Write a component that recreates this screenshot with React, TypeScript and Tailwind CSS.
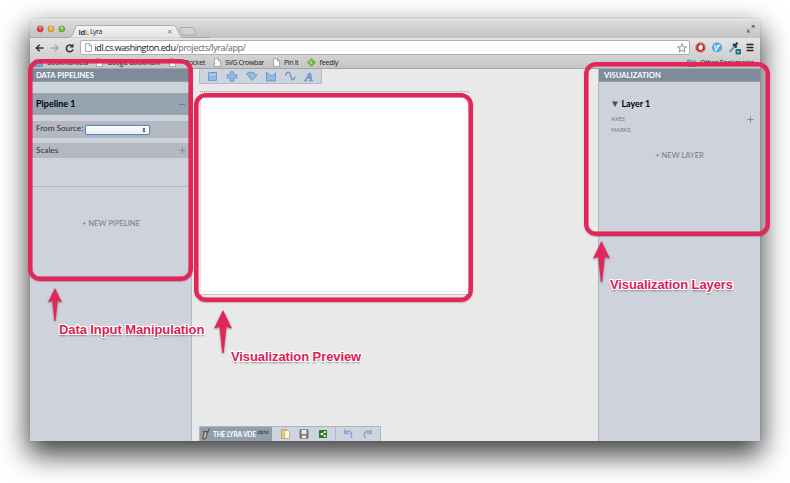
import React from 'react';

const lato = "font-['Lato','Liberation_Sans',sans-serif]";
const lucida = "font-['Open_Sans','DejaVu_Sans',sans-serif]";

function PageIcon() {
  return (
    <svg width="7" height="9" viewBox="0 0 7 9" className="shrink-0">
      <path d="M.5.5h3.7l2.3 2.3v5.7h-6zM4.2.5v2.3h2.3" fill="#fafafa" stroke="#999" strokeWidth=".8" />
    </svg>
  );
}

function FolderIcon() {
  return (
    <svg width="9" height="8" viewBox="0 0 9 8" className="shrink-0">
      <path d="M.5 1h3l.8 1h4.2v5.500h-8z" fill="#7ea6d0" stroke="#5682b4" strokeWidth=".8" />
      <path d="M1 3.200h7" stroke="#b9d3ec" strokeWidth=".7" />
    </svg>
  );
}

function TitleBar() {
  return (
    <div className="relative flex h-[19px] items-end rounded-t-[3px] border-t border-[#ececec] bg-gradient-to-b from-[#dddddd] to-[#c2c2c2]">
      <svg width="180" height="19" viewBox="0 0 180 19" className="absolute bottom-0 left-0">
        <defs>
          <linearGradient id="tab" x2="0" y2="1">
            <stop stopColor="#f3f3f3" />
            <stop offset="1" stopColor="#e5e5e5" />
          </linearGradient>
        </defs>
        <path d="M0 18.500H39C42 18 43 15 44.500 11S46 6.500 49 6.500H142C145 6.500 146 8 147.500 11S150 18 153 18.500H180" fill="url(#tab)" stroke="#a0a0a0" strokeWidth=".8" />
        <path d="M150.500 8.500H162C164 8.500 165 11 166 16H155C152 16 151 12 149.500 9.500Z" fill="#d0d0d0" stroke="#999" strokeWidth=".7" />
        <g strokeWidth=".7">
          <circle cx="10.200" cy="10" r="3" fill="#e3453e" stroke="#a3352f" />
          <circle cx="21" cy="10" r="3" fill="#f0ae38" stroke="#b37c20" />
          <circle cx="31.800" cy="10" r="3" fill="#7fc14c" stroke="#548a32" />
        </g>
        <g fill="#fff" opacity=".5">
          <ellipse cx="10.200" cy="8.500" rx="1.600" ry=".9" />
          <ellipse cx="21" cy="8.500" rx="1.600" ry=".9" />
          <ellipse cx="31.800" cy="8.500" rx="1.600" ry=".9" />
        </g>
        <path d="M138 10.800l3.600 3.600m0-3.600l-3.600 3.600" stroke="#777" />
      </svg>
      <div className={`relative ml-[48.500px] flex h-[12px] items-center text-[7px] leading-[12px] tracking-[-.3px] text-[#222] ${lucida}`}>
        <span className="text-[7.500px] font-bold text-[#4b2e83]">id</span>
        <span className="w-[5px] text-[7.500px] font-bold text-[#d9952b]">L</span>
        <span className="tracking-[-.5px]">Lyra</span>
      </div>
      <svg width="10" height="10" viewBox="0 0 10 10" className="absolute right-[4px] top-[4px]" fill="#6b6b6b" stroke="#6b6b6b">
        <path d="M5 1h3.500v3.500zM1 5v3.500h3.500z" stroke="none" />
        <path d="M5.500 4l2-2M2 7.500l2-2" />
      </svg>
    </div>
  );
}

function AddressBar() {
  return (
    <div className="flex h-[19px] items-center bg-gradient-to-b from-[#e4e4e4] to-[#d1d1d1] pl-[5px] pr-[3.500px]">
      <svg width="40" height="12" viewBox="0 0 40 12" fill="none" strokeWidth="1.500" className="shrink-0">
        <path d="M8.500 6H1.500M4.700 2.700L1.400 6l3.300 3.300" stroke="#333" />
        <path d="M16 6h7M19.800 2.700L23.100 6l-3.300 3.300" stroke="#aaa" />
        <path d="M37.300 4A3.400 3.400 0 1 0 38 7.500" stroke="#333" />
        <path d="M38.500 1.500v4h-4z" fill="#333" />
      </svg>
      <div className="ml-[5px] flex h-[15px] w-[610px] items-center rounded-[2px] border border-[#b0b0b0] bg-white pl-[3.500px] pr-[4px]">
        <PageIcon />
        <span className={`ml-[3px] text-[9px] leading-[13px] tracking-[-.45px] text-[#666] ${lucida}`}>
          <span className="text-[#111]">idl.cs.washington.edu</span>/projects/lyra/app/
        </span>
        <svg width="10" height="10" viewBox="0 0 10 10" className="-mr-[2px] ml-auto">
          <path d="M5 .7l1.200 3.100 3.200.1-2.500 2 .9 3.200L5 7.300 2.200 9.100l.9-3.200-2.500-2 3.200-.1z" fill="#fff" stroke="#666" strokeWidth=".7" />
        </svg>
      </div>
      <svg width="62" height="14" viewBox="0 0 62 14" className="ml-auto shrink-0">
        <circle cx="5.500" cy="6.500" r="5" fill="#fff" stroke="#888" strokeWidth=".8" />
        <path d="M3.700 2.200h3.600l2.500 2.500v3.600l-2.500 2.500H3.700L1.200 8.300V4.700z" fill="#d21f20" />
        <path d="M3.500 5.500v2l1.300 1.500h1.900l1-1.700V4.700l-1-.2-.5-1h-1l-.5 1z" fill="#fff" />
        <circle cx="22" cy="6.500" r="5" fill="#55a9dc" />
        <path d="M19.500 4l1.500 5.500 3.800-6M21.500 6l2-2" fill="none" stroke="#e8f7ff" strokeWidth="1.200" />
        <path d="M34.800 10.800l4.700-5.300" stroke="#6f93cc" strokeWidth="2" />
        <path d="M38 3l3.700 3.400M39.800 4.800l2.700-3" stroke="#333" strokeWidth="2.200" />
        <rect x="40.500" y="8" width="5.500" height="5.500" rx="1" fill="#237779" />
        <path d="M42.200 10.700h2" stroke="#fff" />
        <path d="M51.500 3.500h7M51.500 6.500h7M51.500 9.500h7" stroke="#222" strokeWidth="1.500" />
      </svg>
    </div>
  );
}

function Bookmark({ icon, label, className = '' }: { icon: React.ReactNode; label: string; className?: string }) {
  return (
    <div className={`flex shrink-0 items-center gap-[4px] whitespace-nowrap ${className}`}>
      {icon}
      <span>{label}</span>
    </div>
  );
}

function BookmarksBar() {
  return (
    <div className={`flex h-[12px] items-center border-b border-[#a5a5a5] bg-gradient-to-b from-[#d1d1d1] to-[#c5c5c5] pl-[4px] pr-[6px] text-[7px] font-medium leading-[11px] tracking-[-.35px] text-[#222] ${lucida}`}>
      <Bookmark className="w-[62px]" icon={<FolderIcon />} label="Bookmarklets" />
      <Bookmark className="w-[73px]" icon={<PageIcon />} label="Google Bookmark" />
      <Bookmark className="w-[45px]" icon={<PageIcon />} label="+ Pocket" />
      <Bookmark className="w-[59px]" icon={<PageIcon />} label="SVG Crowbar" />
      <Bookmark className="w-[33.500px]" icon={<PageIcon />} label="Pin It" />
      <Bookmark
        className="gap-[3px] tracking-[-.15px]"
        icon={
          <svg width="9" height="9" viewBox="0 0 9 9">
            <path d="M4.500 0L9 4.500 4.500 9 0 4.500z" fill="#69b83a" />
            <path d="M3 4.700l1.800-1.900M4 6.200l1.300-1.300" stroke="#fff" />
          </svg>
        }
        label="feedly"
      />
      <Bookmark className="ml-auto tracking-[-.25px]" icon={<FolderIcon />} label="Other Bookmarks" />
    </div>
  );
}

function PanelHeader({ title }: { title: string }) {
  return (
    <div className="h-[13px] border-b border-[#8c99a8] bg-[#7e8b9a] pl-[5px] text-[7.600px] font-bold leading-[13.500px] text-white">{title}</div>
  );
}

function PipelinePanel() {
  return (
    <aside className={`flex w-[162px] shrink-0 flex-col border-r border-[#b0bac8] bg-[#cdd2db] pl-px ${lato}`}>
      <PanelHeader title="DATA PIPELINES" />
      <div className="mt-[11px] flex h-[22px] items-center justify-between bg-[#96a4b2] pl-[5px] pr-[6px] text-[9px] font-bold text-black">
        <span>Pipeline 1</span>
        <span className="h-px w-[6px] bg-[#68798b]" />
      </div>
      <div className="mt-[6px] flex h-[17px] items-center bg-[#b3b8c1] pl-[5px] text-[8.200px] text-[#333]">
        <span className="-mt-[3px] w-[48.500px] whitespace-nowrap">From Source:</span>
        <div className="flex h-[10px] w-[65px] items-center justify-end rounded-[2px] border border-[#4f8bd0] bg-gradient-to-b from-white to-[#eeeeee] pr-[2.500px] shadow-[0_0_1px_#4f8bd0]">
          <svg width="4" height="6" viewBox="0 0 4 6">
            <path d="M.5 2.500L2 .5l1.500 2zM.5 3.500L2 5.500l1.500-2z" fill="#222" />
          </svg>
        </div>
      </div>
      <div className="mt-[5px] flex h-[15px] items-center justify-between bg-[#b3b8c1] pl-[5px] pr-[5.500px] text-[8.200px] text-[#333]">
        <span>Scales</span>
        <PlusMark />
      </div>
      <div className="mt-[28px] h-px bg-[#aebbc8]" />
      <div className="mt-[29.500px] text-center text-[7.600px] leading-[12px] text-[#728090]">+ NEW PIPELINE</div>
    </aside>
  );
}

function PlusMark() {
  return (
    <svg width="7" height="7" viewBox="0 0 7 7">
      <path d="M3.500 .5v6M.5 3.500h6" stroke="#7d8d9d" />
    </svg>
  );
}

function MarkTools() {
  return (
    <div className="ml-[7px] h-[15px] w-[123px] border border-t-0 border-[#b0bccb] bg-[#cdd4de]">
      <svg width="121" height="14" viewBox="0 0 121 14" fill="#91bbe4" stroke="#608fc2" strokeWidth=".8">
        <rect x="8.500" y="3.500" width="8" height="8" rx=".5" />
        <path d="M9 5.500h7" stroke="#b5d3f0" strokeWidth="1" />
        <path d="M30.300 2.800h3.400v3h3v3.400h-3v3h-3.400v-3h-3V5.800h3z" />
        <path d="M46.500 4.500q5.500-3.500 10.500 1.800l-5 5.200z" />
        <path d="M49.500 5.500q3-1.500 4.500 1.300l-1.700 1.700z" fill="#bcd9f3" strokeWidth=".6" />
        <path d="M66.500 3l2.500 3 3.500.7L75.500 4v8h-9z" />
        <path d="M85.500 6.500c2-5 4-4 5 0s3 7 4.500 1" fill="none" strokeWidth="1.200" />
        <text x="105" y="11.800" fontSize="12" fontWeight="bold" fontStyle="italic" fontFamily="Liberation Serif, serif" strokeWidth=".6" fill="#78abdf">A</text>
      </svg>
    </div>
  );
}

function LyraBar() {
  return (
    <div className="ml-[7px] mt-auto flex h-[15px] w-[182px] border border-b-0 border-[#a8b7c5] bg-[#cdd4de]">
      <div className={`flex w-[72px] shrink-0 items-center bg-[#8f9fae] font-bold text-white ${lato}`}>
        <svg width="13" height="14" viewBox="0 0 13 14" fill="none" className="shrink-0">
          <path d="M4.300 4.500L2.700 11.800H5.600L7.600 4.800z" fill="#b9ab9c" stroke="#594535" strokeWidth="1" />
          <path d="M3 4.300l5 .5 1.500-3" stroke="#705238" strokeWidth="1.200" />
          <path d="M5.900 5.500l-1.500 5.500" stroke="#eee5d8" strokeWidth=".6" />
        </svg>
        <span className="whitespace-nowrap text-[6.700px] tracking-[-.3px] [word-spacing:.4px]">THE LYRA VDE</span>
        <span className="-mt-[3px] ml-[1.500px] text-[5px] font-normal italic text-[#333]">alpha</span>
      </div>
      <svg width="108" height="14" viewBox="0 0 108 14" className="shrink-0">
        <path d="M9.500 2.500h5v9h-5z" fill="#edcf79" stroke="#b6933f" strokeWidth=".7" />
        <path d="M12.500 3.500h3l2 2v6h-5z" fill="#fff7d8" stroke="#a99b74" strokeWidth=".6" />
        <path d="M28 2.800h8v8.400h-8z" fill="#777d88" stroke="#555b66" strokeWidth=".7" />
        <path d="M29.500 3h5v4h-5z" fill="#fadfda" />
        <path d="M30 8.500h4v2.500h-4z" fill="#f5f5f5" />
        <rect x="47" y="3" width="8" height="8" rx=".7" fill="#287b22" />
        <path d="M53.200 4.900L49.500 7l3.700 2.100" fill="none" stroke="#fff" strokeWidth=".8" />
        <g fill="#fff"><circle cx="53" cy="5" r="1" /><circle cx="49.500" cy="7" r="1" /><circle cx="53" cy="9" r="1" /></g>
        <path d="M63.500 0v14" stroke="#aebccb" />
        <g fill="none" stroke="#8fa5d0" strokeWidth="1.600">
          <path d="M73 5.500c5-3 8 0 6 5.500M73 2.500v4h4" />
          <path d="M99 5.500c-5-3-8 0-6 5.500M99 2.500v4h-4" />
        </g>
      </svg>
    </div>
  );
}

function LayersPanel() {
  return (
    <aside className={`flex w-[162px] shrink-0 flex-col border-l border-[#abb9c7] bg-[#cdd2db] ${lato}`}>
      <PanelHeader title="VISUALIZATION" />
      <div className="mt-[16px] flex items-center pl-[12.500px] text-[8.900px] font-bold leading-[12px] text-black">
        <svg width="6" height="6" viewBox="0 0 6 6"><path d="M0 .5h6L3 6z" fill="#4b5056" /></svg>
        <span className="ml-[4px]">Layer 1</span>
      </div>
      <div className="mt-[4px] flex h-[11px] items-center justify-between pl-[12px] pr-[6px] text-[5.700px] text-[#6f7d8c]">
        <span>AXES</span>
        <PlusMark />
      </div>
      <div className="flex h-[10px] items-center pl-[12px] text-[5.700px] text-[#6f7d8c]">MARKS</div>
      <div className="mt-[14px] text-center text-[7.600px] leading-[12px] text-[#728090]">+ NEW LAYER</div>
    </aside>
  );
}

function Frame({ className }: { className: string }) {
  return (
    <div className={`absolute border-4 border-[#e32659] shadow-[0_1px_1px_rgba(100,50,60,.3),inset_0_0_0_.5px_#d2134b] ${className}`} />
  );
}

function Arrow({ className, height }: { className: string; height: number }) {
  return (
    <svg height={height} viewBox="0 0 18 42" preserveAspectRatio="none" className={`absolute drop-shadow-[0_1px_1px_rgba(60,60,60,.5)] ${className}`}>
      <path d="M9 0l9 18-5.500-1.500L9.700 42H8.300L5.500 16.500 0 18z" fill="#e32659" />
    </svg>
  );
}

function Callout({ className, children }: { className: string; children: string }) {
  return (
    <div className={`absolute whitespace-nowrap font-['Liberation_Sans',Arial,sans-serif] text-[13px] font-bold leading-[16px] tracking-[-.09px] text-[#dc2054] [text-shadow:1px_0_#fff,-1px_0_#fff,0_1px_#fff,0_-1px_#fff,1px_1px_#fff,-1px_-1px_#fff,1px_-1px_#fff,-1px_1px_#fff,0_2px_2px_#777] ${className}`}>
      {children}
    </div>
  );
}

export default function App() {
  return (
    <div className="relative h-[483px] w-[790px] overflow-hidden bg-white pl-[30px] pt-[19px]">
      <main className="flex h-[422px] w-[730px] flex-col rounded-t-[3px] shadow-[0_0_1px_rgba(60,60,60,.6),0_12px_28px_2px_rgba(0,0,0,.75)]">
        <TitleBar />
        <AddressBar />
        <BookmarksBar />
        <div className="flex min-h-0 flex-1">
          <PipelinePanel />
          <section className="flex flex-1 flex-col bg-[#e9e9e9]">
            <MarkTools />
            <div className="ml-[8px] mt-[7px] h-[204px] w-[269px] border-b border-t border-[#c4c4c4] bg-white pb-[2px]">
              <div className="h-full border border-dotted border-[#c6c6c6] border-b-[#dddddd]" />
            </div>
            <LyraBar />
          </section>
          <LayersPanel />
        </div>
      </main>
      <Frame className="left-[28px] top-[59px] h-[222px] w-[165px] rounded-[12px]" />
      <Frame className="left-[194px] top-[93px] h-[209px] w-[279px] rounded-[12px]" />
      <Frame className="left-[584px] top-[62px] h-[174px] w-[186px] rounded-[12px]" />
      <Arrow className="left-[48px] top-[288px] w-[14px]" height={33} />
      <Arrow className="left-[214px] top-[310px] w-[18px]" height={43} />
      <Arrow className="left-[593px] top-[241px] w-[17px]" height={41} />
      <Callout className="left-[59px] top-[322px]">Data Input Manipulation</Callout>
      <Callout className="left-[231px] top-[349px]">Visualization Preview</Callout>
      <Callout className="left-[610px] top-[277px]">Visualization Layers</Callout>
    </div>
  );
}
